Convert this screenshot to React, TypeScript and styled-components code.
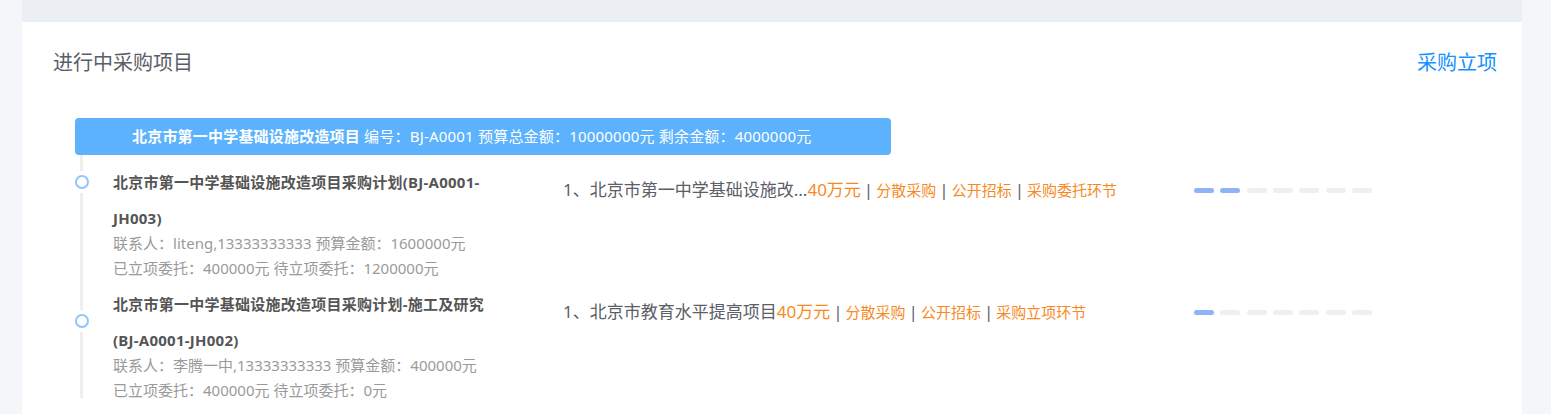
import React from "react";
import styled, { createGlobalStyle } from "styled-components";

const GlobalStyle = createGlobalStyle`
  html, body {
    margin: 0;
    padding: 0;
    background: #f5f6fa;
    font-family: "Noto Sans", "Noto Sans CJK SC", sans-serif;
  }
`;

const Page = styled.div`
  width: 1500px;
  margin-left: 22px;
  display: flex;
  flex-direction: column;
`;

const TopStrip = styled.div`
  height: 22px;
  background: #ebeef2;
`;

const Card = styled.section`
  background: #ffffff;
  padding: 0 25px 12px 31px;
  min-height: 392px;
  box-sizing: border-box;
`;

const Header = styled.header`
  height: 80px;
  display: flex;
  align-items: center;
  justify-content: space-between;
`;

const Title = styled.h2`
  margin: 0;
  padding-top: 2px;
  font-size: 20px;
  font-weight: 400;
  color: #5a5e66;
  line-height: 24px;
`;

const HeaderLink = styled.a`
  padding-top: 2px;
  font-size: 20px;
  color: #1890ff;
  line-height: 24px;
  cursor: pointer;
`;

const ProjectBar = styled.div`
  margin: 16px 0 0 22px;
  width: 816px;
  height: 37px;
  box-sizing: border-box;
  padding-left: 57px;
  background: #5cb2fd;
  border-radius: 4px;
  color: #ffffff;
  font-size: 15px;
  letter-spacing: 0.2px;
  line-height: 37px;
  white-space: nowrap;
`;

const Strong = styled.strong`
  font-weight: 700;
`;

const Timeline = styled.div`
  position: relative;
  margin-left: 22px;
  padding-top: 9px;
  display: flex;
  flex-direction: column;
  gap: 5px;

  &::before {
    content: "";
    position: absolute;
    left: 5px;
    top: 0;
    bottom: 5px;
    width: 3px;
    background: #eeeeee;
  }
`;

const Item = styled.div`
  position: relative;
  padding-left: 38px;
  display: flex;
  align-items: flex-start;
`;

const Marker = styled.span<{ $top: number }>`
  position: absolute;
  left: 0;
  top: ${(p) => p.$top}px;
  width: 14px;
  height: 14px;
  box-sizing: border-box;
  border: 2px solid #8ec5fc;
  border-radius: 50%;
  background: #ffffff;
  box-shadow: 0 0 0 4px #ffffff;
`;

const PlanInfo = styled.div`
  width: 450px;
  flex-shrink: 0;
`;

const PlanTitle = styled.div`
  width: 385px;
  font-size: 15px;
  font-weight: 700;
  letter-spacing: 0.25px;
  color: #555555;
  line-height: 36px;
`;

const PlanDetails = styled.div`
  margin-top: -5px;
  font-size: 15px;
  color: #9a9a9a;
  line-height: 25px;
`;

const Tasks = styled.div`
  width: 631px;
  flex-shrink: 0;
  padding-top: 14px;
  font-size: 17px;
  line-height: 24px;
  color: #5a5e66;
  white-space: nowrap;
`;

const Amount = styled.span`
  color: #f7891f;
`;

const Tag = styled.span`
  color: #f7891f;
  font-size: 15px;
`;

const Sep = styled.span`
  color: #5a6270;
  padding: 0 3px;
`;

const Progress = styled.div`
  padding-top: 24px;
  display: flex;
  gap: 6.33px;
`;

const Segment = styled.span<{ $done: boolean }>`
  width: 20px;
  height: 5px;
  border-radius: 3px;
  background: ${(p) => (p.$done ? "#8fb3f7" : "#efefef")};
`;

type Plan = {
  title: string;
  contact: string;
  budget: string;
  done: string;
  pending: string;
  task: string;
  tags: string[];
  steps: number;
  markerTop: number;
};

const plans: Plan[] = [
  {
    title: "北京市第一中学基础设施改造项目采购计划(BJ-A0001-JH003)",
    contact: "liteng,13333333333",
    budget: "1600000元",
    done: "400000元",
    pending: "1200000元",
    task: "1、北京市第一中学基础设施改...",
    tags: ["分散采购", "公开招标", "采购委托环节"],
    steps: 2,
    markerTop: 11,
  },
  {
    title: "北京市第一中学基础设施改造项目采购计划-施工及研究(BJ-A0001-JH002)",
    contact: "李腾一中,13333333333",
    budget: "400000元",
    done: "400000元",
    pending: "0元",
    task: "1、北京市教育水平提高项目",
    tags: ["分散采购", "公开招标", "采购立项环节"],
    steps: 1,
    markerTop: 28,
  },
];

export default function App() {
  return (
    <>
      <GlobalStyle />
      <Page>
        <TopStrip />
        <Card>
          <Header>
            <Title>进行中采购项目</Title>
            <HeaderLink>采购立项</HeaderLink>
          </Header>
          <ProjectBar>
            <Strong>北京市第一中学基础设施改造项目</Strong> 编号：BJ-A0001 预算总金额：10000000元 剩余金额：4000000元
          </ProjectBar>
          <Timeline>
            {plans.map((p) => (
              <Item key={p.title}>
                <Marker $top={p.markerTop} />
                <PlanInfo>
                  <PlanTitle>{p.title}</PlanTitle>
                  <PlanDetails>
                    <div>
                      联系人：{p.contact} 预算金额：{p.budget}
                    </div>
                    <div>
                      已立项委托：{p.done} 待立项委托：{p.pending}
                    </div>
                  </PlanDetails>
                </PlanInfo>
                <Tasks>
                  {p.task}
                  <Amount>40万元</Amount>
                  {p.tags.map((t) => (
                    <React.Fragment key={t}>
                      <Sep>|</Sep>
                      <Tag>{t}</Tag>
                    </React.Fragment>
                  ))}
                </Tasks>
                <Progress>
                  {Array.from({ length: 7 }).map((_, i) => (
                    <Segment key={i} $done={i < p.steps} />
                  ))}
                </Progress>
              </Item>
            ))}
          </Timeline>
        </Card>
      </Page>
    </>
  );
}
